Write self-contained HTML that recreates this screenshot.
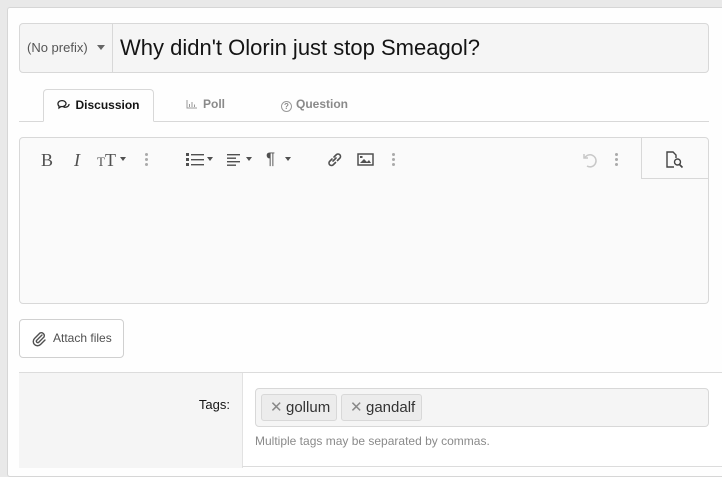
<!DOCTYPE html>
<html><head><style>
*{box-sizing:border-box;margin:0;padding:0}
body{width:722px;height:468px;background:#e9e9e9;font-family:"Liberation Sans",sans-serif;position:relative;overflow:hidden}
.panel{position:absolute;left:7px;top:7px;width:720px;height:470px;background:#fefefe;border:1px solid #d6d6d6;border-radius:3px}
.abs{position:absolute}
.title{left:19px;top:23px;width:690px;height:50px;border:1px solid #d8d8d8;border-radius:4px;background:#f5f5f5;overflow:hidden}
.prefix{left:0;top:0;width:93px;height:48px;border-right:1px solid #d8d8d8;color:#555;font-size:13px;line-height:48px;padding-left:7px}
.ttext{left:100px;top:0;line-height:48px;font-size:22px;color:#141414}
.tabline{left:19px;top:121px;width:690px;height:1px;background:#d8d8d8}
.tab{top:89px;height:33px;font-size:12px;font-weight:bold;line-height:31px;color:#8a8a8a}
.tab.act{left:43px;width:111px;border:1px solid #d8d8d8;border-bottom:1px solid #fefefe;border-radius:4px 4px 0 0;background:#fefefe;color:#141414;text-align:center}
.editor{left:19px;top:137px;width:690px;height:167px;border:1px solid #d8d8d8;border-radius:4px;background:#fafafa}
.ic{position:absolute;top:149px;color:#505050;font-size:19px}
.dots{position:absolute;top:153px;width:3px}
.dots i{display:block;width:3px;height:3px;border-radius:50%;background:#aaa;margin-bottom:2px}
.attach{left:19px;top:319px;width:105px;height:39px;border:1px solid #d0d0d0;border-radius:4px;background:#fff;font-size:12px;color:#505050;line-height:37px;padding-left:33px}
.lower{left:19px;top:372px;width:703px;height:96px;border-top:1px solid #dcdcdc;background:#f5f5f5}
.right{left:242px;top:373px;width:480px;height:95px;background:#fff;border-left:1px solid #e2e2e2}
.tags{left:255px;top:388px;width:454px;height:39px;border:1px solid #d8d8d8;border-radius:4px;background:#f5f5f5}
.chip{position:absolute;top:5px;height:27px;border:1px solid #d8d8d8;border-radius:3px;background:#ececec;font-size:15px;line-height:25px;color:#333;padding-left:24px}
.chip b{position:absolute;left:8px;top:0;font-weight:normal;color:#888;font-size:15px}
.car{position:absolute;top:157px;width:0;height:0;border-left:3.5px solid transparent;border-right:3.5px solid transparent;border-top:4px solid #505050}
</style></head><body>
<div class="panel"></div>
<div class="abs title"><div class="abs prefix">(No prefix) <span style="display:inline-block;width:0;height:0;border-left:4px solid transparent;border-right:4px solid transparent;border-top:5px solid #666;margin-left:6px;vertical-align:2px"></span></div><div class="abs ttext">Why didn't Olorin just stop Smeagol?</div></div>
<div class="abs tabline"></div>
<div class="abs tab act"><svg width="13" height="11" viewBox="0 0 13 11" style="vertical-align:-1px;margin-right:5px"><path d="M1 4.5a4 3 0 1 1 3 3L2 9V7A4 3 0 0 1 1 4.5z M6.5 8a4 3 0 0 0 5.5-3" fill="none" stroke="#222" stroke-width="1.3"/></svg>Discussion</div>
<div class="abs tab" style="left:186px"><svg width="12" height="10" viewBox="0 0 12 10" style="margin-right:5px;vertical-align:-1px"><path d="M1 1v8h10M3.5 8V5M6 8V3M8.5 8V5.5" stroke="#999" stroke-width="1" fill="none"/></svg>Poll</div>
<div class="abs tab" style="left:281px"><span style="display:inline-block;width:11px;height:11px;border:1.3px solid #999;border-radius:50%;font-size:8px;line-height:9px;text-align:center;vertical-align:-1px;margin-right:4px">?</span>Question</div>
<div class="abs editor"></div>
<div class="abs" style="left:641px;top:138px;width:67px;height:41px;border-left:1px solid #d8d8d8;border-bottom:1px solid #d8d8d8;background:#fafafa;border-radius:0 4px 0 0"></div>
<div class="ic" style="left:41px;font-family:'Liberation Serif',serif;top:150px;font-size:18px">B</div>
<div class="ic" style="left:74px;font-family:'Liberation Serif',serif;font-style:italic;top:150px;font-size:18px">I</div>
<div class="ic" style="left:97px;font-family:'Liberation Serif',serif;top:150px;font-size:18px"><span style="font-size:13px">T</span>T</div>
<div class="car" style="left:120px"></div>
<div class="dots" style="left:145px"><i></i><i></i><i></i></div>
<svg class="abs" style="left:186px;top:153px" width="19" height="13" viewBox="0 0 19 13"><g fill="#505050"><rect x="0" y="0" width="3" height="3"/><rect x="0" y="5" width="3" height="3"/><rect x="0" y="10" width="3" height="3"/><rect x="5" y="1" width="13" height="1.4"/><rect x="5" y="6" width="13" height="1.4"/><rect x="5" y="11" width="13" height="1.4"/></g></svg>
<div class="car" style="left:207px"></div>
<svg class="abs" style="left:227px;top:153px" width="14" height="13" viewBox="0 0 14 13"><g fill="#505050"><rect x="0" y="1" width="13" height="1.4"/><rect x="0" y="4.5" width="9" height="1.4"/><rect x="0" y="8" width="13" height="1.4"/><rect x="0" y="11.5" width="9" height="1.4"/></g></svg>
<div class="car" style="left:246px"></div>
<div class="ic" style="left:266px;font-size:17px;top:149px">&#182;</div>
<div class="car" style="left:285px"></div>
<svg class="abs" style="left:326px;top:151px" width="17" height="17" viewBox="0 0 17 17"><path d="M7 10l3-3M6 8L3.5 10.5a2.5 2.5 0 0 0 3.5 3.5L9.5 11.5M8 6l2.5-2.5a2.5 2.5 0 0 1 3.5 3.5L11.5 9.5" fill="none" stroke="#505050" stroke-width="1.6" stroke-linecap="round"/></svg>
<svg class="abs" style="left:357px;top:153px" width="18" height="14" viewBox="0 0 18 14"><rect x="1" y="1" width="15" height="11" fill="none" stroke="#505050" stroke-width="1.5"/><path d="M3 10l4-4 3 3 2-2 2 3z" fill="#505050"/><rect x="3" y="3" width="2.5" height="2" fill="#505050"/></svg>
<div class="dots" style="left:392px"><i></i><i></i><i></i></div>
<svg class="abs" style="left:580px;top:151px" width="18" height="18" viewBox="0 0 18 18"><path d="M4 3v4h4M4.5 7.5A6 6 0 1 1 7 15" fill="none" stroke="#c8c8c8" stroke-width="1.5"/></svg>
<div class="dots" style="left:615px"><i></i><i></i><i></i></div>
<svg class="abs" style="left:665px;top:150px" width="20" height="19" viewBox="0 0 20 19"><path d="M9 17H2V2h6l3 3v3" fill="none" stroke="#444" stroke-width="1.4"/><circle cx="12.5" cy="12" r="3" fill="none" stroke="#444" stroke-width="1.4"/><path d="M14.5 14.5l3 3" stroke="#444" stroke-width="1.6"/></svg>
<div class="abs attach"><svg class="abs" style="left:12px;top:11px" width="15" height="16" viewBox="0 0 15 16"><path d="M10 4L4.5 9.5a1.5 1.5 0 0 0 2 2L12 6a3 3 0 0 0-4-4L2.5 7.5a4.2 4.2 0 0 0 6 6L13 9" fill="none" stroke="#505050" stroke-width="1.4" stroke-linecap="round"/></svg>Attach files</div>
<div class="abs lower"></div>
<div class="abs right"></div>
<div class="abs" style="left:160px;top:397px;width:70px;text-align:right;font-size:13px;color:#141414">Tags:</div>
<div class="abs tags"><div class="chip" style="left:5px;width:76px"><b>&#10005;</b>gollum</div><div class="chip" style="left:85px;width:81px"><b>&#10005;</b>gandalf</div></div>
<div class="abs" style="left:255px;top:434px;font-size:12px;color:#8a8a8a">Multiple tags may be separated by commas.</div>
<div class="abs" style="left:242px;top:466px;width:480px;height:1px;background:#dcdcdc"></div>
</body></html>
